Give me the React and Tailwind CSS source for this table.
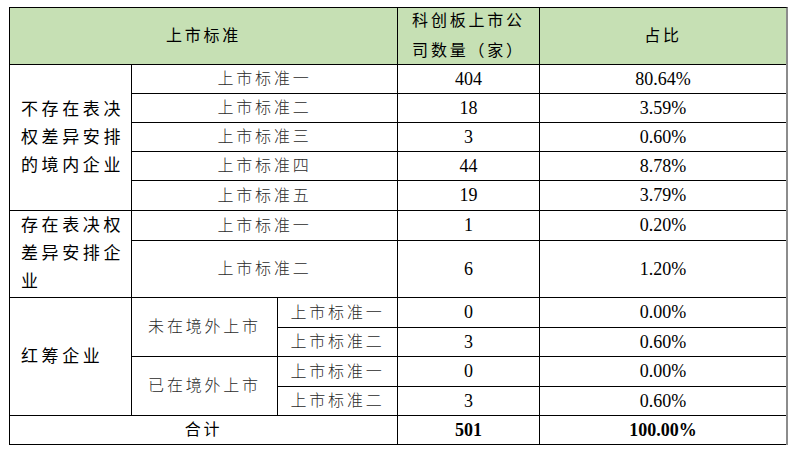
const rows = [
  { cls: "col-start-2 col-span-2 row-start-2", label: "上市标准一", num: "404", pct: "80.64%", r: "row-start-2" },
  { cls: "col-start-2 col-span-2 row-start-3", label: "上市标准二", num: "18", pct: "3.59%", r: "row-start-3" },
  { cls: "col-start-2 col-span-2 row-start-4", label: "上市标准三", num: "3", pct: "0.60%", r: "row-start-4" },
  { cls: "col-start-2 col-span-2 row-start-5", label: "上市标准四", num: "44", pct: "8.78%", r: "row-start-5" },
  { cls: "col-start-2 col-span-2 row-start-6", label: "上市标准五", num: "19", pct: "3.79%", r: "row-start-6" },
  { cls: "col-start-2 col-span-2 row-start-7", label: "上市标准一", num: "1", pct: "0.20%", r: "row-start-7" },
  { cls: "col-start-2 col-span-2 row-start-8", label: "上市标准二", num: "6", pct: "1.20%", r: "row-start-8" },
  { cls: "col-start-3 row-start-9", label: "上市标准一", num: "0", pct: "0.00%", r: "row-start-9" },
  { cls: "col-start-3 row-start-10", label: "上市标准二", num: "3", pct: "0.60%", r: "row-start-10" },
  { cls: "col-start-3 row-start-11", label: "上市标准一", num: "0", pct: "0.00%", r: "row-start-11" },
  { cls: "col-start-3 row-start-12", label: "上市标准二", num: "3", pct: "0.60%", r: "row-start-12" },
];

const cell = "border-r border-b border-black flex items-center justify-center";
const body = "text-[16px] tracking-[2.8px] text-[#2a2a2a] font-light";
const head = "text-[16px] tracking-[2.8px] text-black";
const num = "col-start-4 text-[18px] text-black";
const pct = "col-start-5 border-r-0 text-[18px] text-black";

function GroupLabel({ className, children }) {
  return (
    <div className={`${cell} ${className} justify-start pl-[11px]`}>
      <p className="w-[108px] text-[17px] leading-[28px] tracking-[3.6px] text-black">{children}</p>
    </div>
  );
}

export default function App() {
  return (
    <div className="w-[800px] h-[461px] bg-white pt-[7px] pl-[9px]" style={{ fontFamily: "'Liberation Serif', 'Noto Sans CJK SC', serif" }}>
      <div className="grid w-fit border-t border-l border-r-2 border-black border-r-[#8c8c8c] grid-cols-[122px_146px_120px_142px_246px] grid-rows-[57px_29px_29px_29px_29px_30px_30px_57px_30px_29px_30px_29px_29px]">
        <div className={`${cell} ${head} col-start-1 col-span-3 row-start-1 bg-[#c6e0b4]`}>上市标准</div>
        <div className={`${cell} ${head} col-start-4 row-start-1 bg-[#c6e0b4] leading-[30px] text-center`}>
          <p>科创板上市公<br />司数量（家）</p>
        </div>
        <div className={`${cell} ${head} col-start-5 row-start-1 border-r-0 bg-[#c6e0b4]`}>占比</div>

        <GroupLabel className="col-start-1 row-start-2 row-span-5">不存在表决权差异安排的境内企业</GroupLabel>
        <GroupLabel className="col-start-1 row-start-7 row-span-2">存在表决权差异安排企业</GroupLabel>
        <GroupLabel className="col-start-1 row-start-9 row-span-4">红筹企业</GroupLabel>

        <div className={`${cell} ${body} col-start-2 row-start-9 row-span-2`}>未在境外上市</div>
        <div className={`${cell} ${body} col-start-2 row-start-11 row-span-2`}>已在境外上市</div>

        {rows.map((r, i) => (
          <div key={i} className="contents">
            <div className={`${cell} ${body} ${r.cls}`}>{r.label}</div>
            <div className={`${cell} ${num} ${r.r}`}>{r.num}</div>
            <div className={`${cell} ${pct} ${r.r}`}>{r.pct}</div>
          </div>
        ))}

        <div className={`${cell} ${head} col-start-1 col-span-3 row-start-13`}>合计</div>
        <div className={`${cell} col-start-4 row-start-13 text-[18px] font-bold`}>501</div>
        <div className={`${cell} col-start-5 row-start-13 border-r-0 text-[18px] font-bold`}>100.00%</div>
      </div>
    </div>
  );
}
